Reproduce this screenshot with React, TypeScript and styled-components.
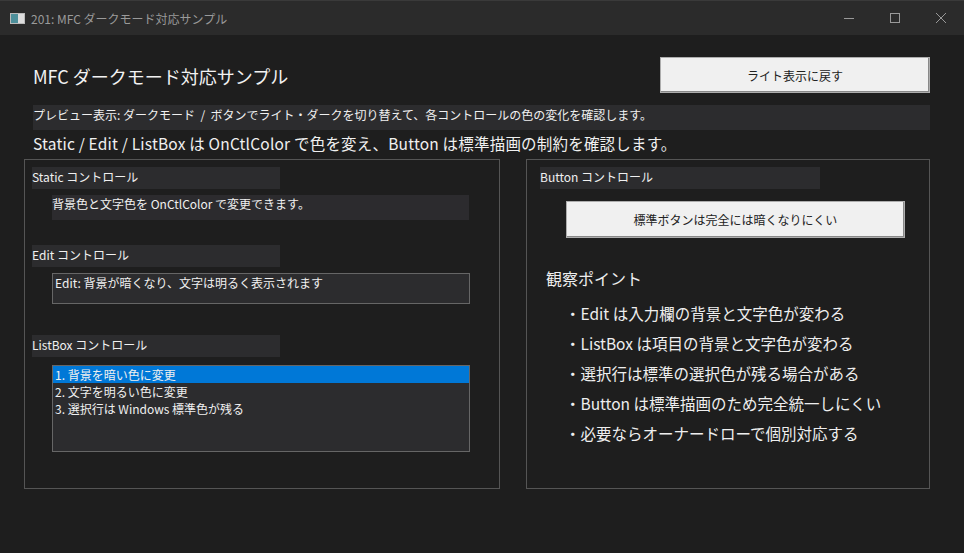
import React from "react";
import styled, { createGlobalStyle } from "styled-components";

const G = createGlobalStyle`
  html,body{margin:0;padding:0;background:#1e1e1e;}
  body{width:964px;height:553px;overflow:hidden;font-family:"Noto Sans CJK JP","Noto Sans",sans-serif;color:#eee;}
`;
const Win = styled.div`width:964px;height:553px;background:#1e1e1e;display:flex;flex-direction:column;border-top:1px solid #3a3a3a;box-sizing:border-box;`;
const TitleBar = styled.div`height:34px;background:#2b2b2b;display:flex;align-items:center;padding-left:10px;font-size:12px;color:#9a9a9a;`;
const Icon = styled.div`width:15px;height:11px;background:linear-gradient(90deg,#4d8f9a 0 55%,#ddd 55% 100%);border:1px solid #bbb;margin-right:6px;box-sizing:border-box;`;
const TitleText = styled.div`flex:1;`;
const Ctl = styled.div`width:46px;height:34px;display:flex;align-items:center;justify-content:center;`;
const Body = styled.div`padding:22px 34px 0 33px;display:flex;flex-direction:column;`;
const Top = styled.div`display:flex;justify-content:space-between;align-items:center;height:36px;`;
const H1 = styled.div`font-size:18px;color:#f2f2f2;padding-top:2px;`;
const LightBtn = styled.button<{w:number;h:number}>`width:${p=>p.w}px;height:${p=>p.h}px;background:#f0f0f0;border:1px solid #adadad;box-shadow:inset -1px -1px 0 #888;font-family:inherit;font-size:12px;color:#222;padding:0;`;
const Preview = styled.div`margin-top:12px;height:25px;background:#2c2c2e;font-size:12px;line-height:20px;padding-left:0;color:#f0f0f0;`;
const Desc = styled.div`font-size:15.5px;height:24px;line-height:26px;color:#f0f0f0;letter-spacing:0.2px;`;
const Groups = styled.div`display:flex;margin-left:-9px;margin-top:5px;`;
const Group = styled.div<{w:number;ml?:number}>`width:${p=>p.w}px;margin-left:${p=>p.ml||0}px;height:330px;border:1px solid #555;box-sizing:border-box;padding:7px 0 0 7px;display:flex;flex-direction:column;`;
const Label = styled.div<{mt?:number}>`width:248px;height:22px;background:#2c2c2e;font-size:12px;line-height:20px;margin-top:${p=>p.mt||0}px;color:#f0f0f0;`;
const StaticText = styled.div`margin:6px 0 0 20px;width:417px;height:25px;background:#2c2b2e;font-size:12px;line-height:18px;padding-left:0;box-sizing:border-box;color:#f0f0f0;`;
const Edit = styled.div`margin:6px 0 0 20px;width:418px;height:31px;background:#2c2c2e;border:1px solid #666;box-sizing:border-box;font-size:12px;line-height:18px;padding-left:2px;color:#f0f0f0;`;
const List = styled.div`margin:8px 0 0 20px;width:418px;height:87px;background:#2c2c2e;border:1px solid #666;box-sizing:border-box;font-size:12px;`;
const Item = styled.div<{sel?:boolean}>`height:17px;line-height:17px;padding-left:2px;background:${p=>p.sel?"#0078d7":"transparent"};color:#f0f0f0;`;
const Center = styled.div`margin:12px 0 0 26px;`;
const Obs = styled.div`margin:28px 0 0 6px;font-size:16px;color:#eee;`;
const Bullets = styled.div`margin:8px 0 0 25px;display:flex;flex-direction:column;`;
const Bullet = styled.div`font-size:15.5px;height:30px;line-height:30px;color:#eee;`;

export default function App(){
  return <Win><G/>
    <TitleBar><Icon/><TitleText>201: MFC ダークモード対応サンプル</TitleText>
      <Ctl><svg width="12" height="12"><line x1="1" y1="6.5" x2="11" y2="6.5" stroke="#999"/></svg></Ctl>
      <Ctl><svg width="12" height="12"><rect x="1.5" y="1.5" width="9" height="9" fill="none" stroke="#999"/></svg></Ctl>
      <Ctl><svg width="12" height="12"><path d="M1 1L11 11M11 1L1 11" stroke="#999"/></svg></Ctl>
    </TitleBar>
    <Body>
      <Top><H1>MFC ダークモード対応サンプル</H1><LightBtn w={270} h={36}>ライト表示に戻す</LightBtn></Top>
      <Preview>プレビュー表示: ダークモード &nbsp;/&nbsp; ボタンでライト・ダークを切り替えて、各コントロールの色の変化を確認します。</Preview>
      <Desc>Static / Edit / ListBox は OnCtlColor で色を変え、Button は標準描画の制約を確認します。</Desc>
      <Groups>
        <Group w={476}>
          <Label>Static コントロール</Label>
          <StaticText>背景色と文字色を OnCtlColor で変更できます。</StaticText>
          <Label mt={25}>Edit コントロール</Label>
          <Edit>Edit: 背景が暗くなり、文字は明るく表示されます</Edit>
          <Label mt={31}>ListBox コントロール</Label>
          <List><Item sel>1. 背景を暗い色に変更</Item><Item>2. 文字を明るい色に変更</Item><Item>3. 選択行は Windows 標準色が残る</Item></List>
        </Group>
        <Group w={404} ml={26} style={{paddingLeft:13}}>
          <Label style={{width:280}}>Button コントロール</Label>
          <Center><LightBtn w={339} h={37}>標準ボタンは完全には暗くなりにくい</LightBtn></Center>
          <Obs>観察ポイント</Obs>
          <Bullets>
            <Bullet>・Edit は入力欄の背景と文字色が変わる</Bullet>
            <Bullet>・ListBox は項目の背景と文字色が変わる</Bullet>
            <Bullet>・選択行は標準の選択色が残る場合がある</Bullet>
            <Bullet>・Button は標準描画のため完全統一しにくい</Bullet>
            <Bullet>・必要ならオーナードローで個別対応する</Bullet>
          </Bullets>
        </Group>
      </Groups>
    </Body>
  </Win>;
}
